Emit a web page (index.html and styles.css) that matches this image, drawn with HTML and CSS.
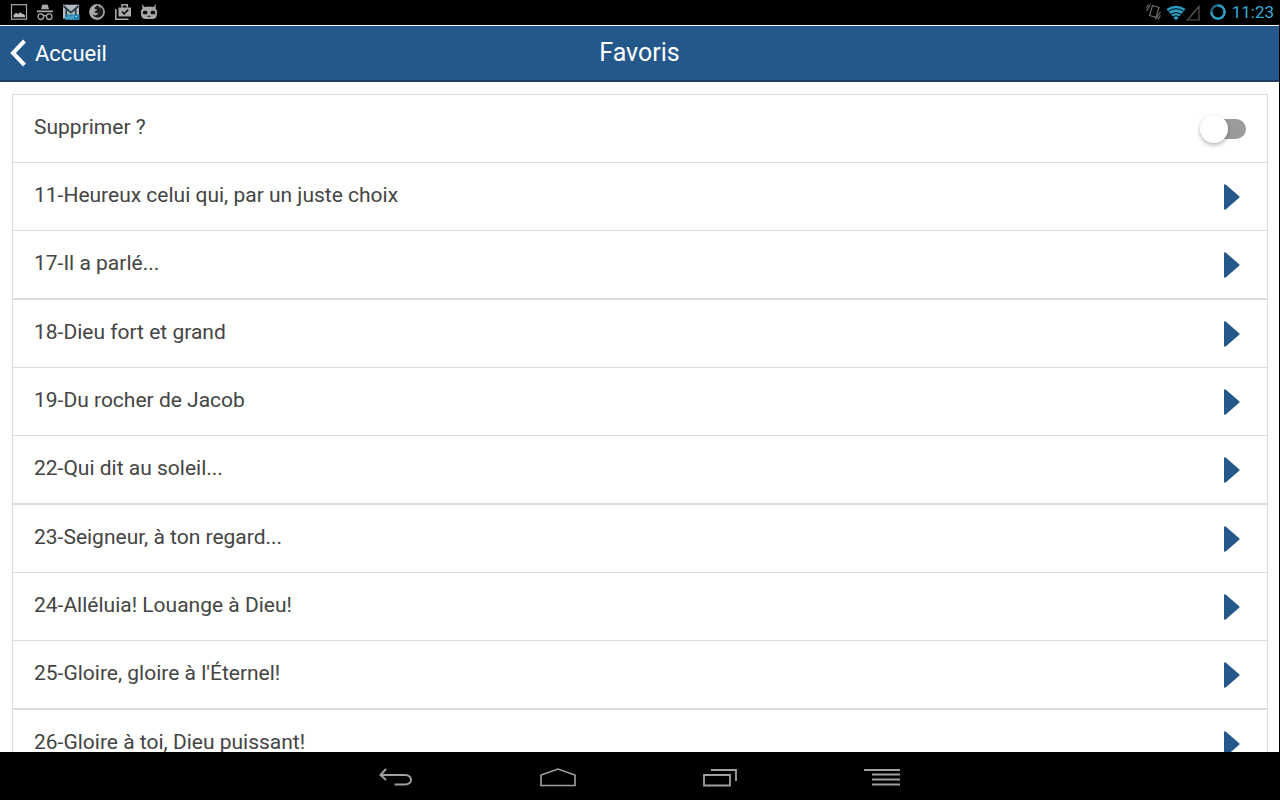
FILE: index.html
```html
<!DOCTYPE html>
<html lang="fr">
<head>
<meta charset="utf-8">
<meta name="viewport" content="width=device-width, initial-scale=1">
<title>Favoris</title>
<link rel="stylesheet" href="styles.css">
</head>
<body>
<svg class="defs" aria-hidden="true">
  <symbol id="arrow" viewBox="0 0 16 26"><path d="M1 1.2 14.500 13 1 24.8Z" fill="#24588b" stroke="#24588b" stroke-width="2" stroke-linejoin="round"/></symbol>
</svg>
<div class="status">
  <div class="status-icons">
    <svg width="18" height="18" viewBox="0 0 18 18"><rect x="1.500" y="1.700" width="15" height="14.500" fill="none" stroke="#a8a8a8" stroke-width="1.200"/><path d="M3.500 14.300v-2.300l2.500-2.200 2 1.200 2.300-1.800 2 1.800h1.200l1.500 1.500v1.800Z" fill="#b8b8b8"/></svg>
    <svg width="18" height="18" viewBox="0 0 18 18"><path d="M5 6.300 6.500 1.300q2.500 1.100 5 0l1.500 5ZM1 7.600h16v1.600H1Z" fill="#a8a8a8"/><g fill="none" stroke="#a8a8a8" stroke-width="1.300"><circle cx="4.800" cy="13.700" r="2.800"/><circle cx="13.200" cy="13.700" r="2.800"/><path d="M7.500 13q1.500-1 3 0"/></g></svg>
    <svg width="18" height="18" viewBox="0 0 18 18"><path d="M1 1.700h16v14H1Z" fill="#b4bcc0"/><path d="M1.500 3 9 9.700 16.500 3M4.300 14V6.500M13.700 14V6.500" fill="none" stroke="#263940" stroke-width="1.700"/><path d="M3 11.500h14.500V17H3Z" fill="#2384ad"/><path d="M4 14.500h2m1-2v3m2-2v3m2-4v3m2-2h2" stroke="#75c4df" fill="none"/></svg>
    <svg width="18" height="18" viewBox="0 0 18 18"><circle cx="9" cy="9" r="7.900" fill="#a8a8a8"/><path d="M9.500 2.200q2.200 1.200 2.800 3.500.5-1 .3-2.200 3.400 3 2.500 6.800-1.200 4.300-5.600 4.400-3.700-.2-4.800-3.400 1.700 1.700 3.800.8l2-1.500q-1-.9-2.400-.5l-1.500-.4q-.2-1.200 1.100-1.600l1.300-.8-.3-1-2-.1Q6.200 4.200 9.500 2.200Z" fill="#1c1c1c"/></svg>
    <svg width="18" height="18" viewBox="0 0 18 18"><path d="M4.500 4.500H17V13.500H4.500Z" fill="#a8a8a8"/><path d="M8 4.500V1.800h5.200v2.700M1.800 6v10.200h12.700" fill="none" stroke="#a8a8a8" stroke-width="1.600"/><path d="m8 8.700 2.200 2.200 4-4.200" fill="none" stroke="#151515" stroke-width="1.700"/></svg>
    <svg width="18" height="18" viewBox="0 0 18 18"><path d="M2 1 4.500 4q4.500-1.200 9 0L16 1l-.5 4.500Q17.500 7 17 10.500q0 5.500-5 5.500H6q-5 0-5-5.500Q.5 7 2.500 5.500Z" fill="#a8a8a8"/><rect x="2.800" y="7.800" width="4.600" height="3.400" rx="1.500" fill="#111"/><rect x="10.600" y="7.800" width="4.600" height="3.400" rx="1.500" fill="#111"/><path d="M7.500 13.300h3" stroke="#111"/></svg>
  </div>
  <div class="status-right">
    <svg width="64" height="20" viewBox="0 0 64 20"><g fill="none" stroke="#747474" stroke-width="1.100"><path d="M7.500 3.500 14 5.500 11 15.500 4.500 13.500Z M1.500 9 5.500 2.500M1.500 5.500 3.500 2.500M10.500 17.500 15.500 10M13 17.500l2.500-4"/></g><path d="M21.500 7q9.500-6.500 19 0L31 18.500Z" fill="#279ec4"/><path d="M23.500 9q7.500-4.500 15 0M26 12q5-3 10 0M28 14.700q3-2 6 0" fill="none" stroke="#000" stroke-width="1"/><path d="M42.500 18H54V4.500Z" fill="none" stroke="#555" stroke-width="1.200"/></svg>
    <svg width="18" height="18" viewBox="0 0 18 18"><circle cx="9" cy="9" r="6.600" fill="none" stroke="#176f8c" stroke-width="2.200"/><path d="M9 2.400A6.600 6.600 0 1 1 2.400 9" fill="none" stroke="#2aa4c8" stroke-width="2.200"/></svg>
    <time class="clock">11:23</time>
  </div>
</div>
<header class="header">
  <a class="back" href="#accueil"><svg width="17" height="28" viewBox="0 0 17 28"><path d="M14.500 2 3 14l11.500 12" fill="none" stroke="#fff" stroke-width="4"/></svg>Accueil</a>
  <h1 class="title">Favoris</h1>
</header>
<main class="content">
  <ul class="list">
    <li><label class="row" for="delete">Supprimer ?<input class="toggle" id="delete" type="checkbox" role="switch"></label></li>
    <li><a class="row" href="#11">11-Heureux celui qui, par un juste choix<svg class="arrow"><use href="#arrow"/></svg></a></li>
    <li><a class="row" href="#17">17-Il a parlé...<svg class="arrow"><use href="#arrow"/></svg></a></li>
    <li><a class="row" href="#18">18-Dieu fort et grand<svg class="arrow"><use href="#arrow"/></svg></a></li>
    <li><a class="row" href="#19">19-Du rocher de Jacob<svg class="arrow"><use href="#arrow"/></svg></a></li>
    <li><a class="row" href="#22">22-Qui dit au soleil...<svg class="arrow"><use href="#arrow"/></svg></a></li>
    <li><a class="row" href="#23">23-Seigneur, à ton regard...<svg class="arrow"><use href="#arrow"/></svg></a></li>
    <li><a class="row" href="#24">24-Alléluia! Louange à Dieu!<svg class="arrow"><use href="#arrow"/></svg></a></li>
    <li><a class="row" href="#25">25-Gloire, gloire à l'Éternel!<svg class="arrow"><use href="#arrow"/></svg></a></li>
    <li><a class="row" href="#26">26-Gloire à toi, Dieu puissant!<svg class="arrow"><use href="#arrow"/></svg></a></li>
  </ul>
</main>
<nav class="navbar">
  <button class="nav-button" aria-label="Retour"><svg width="36" height="20" viewBox="0 0 36 20"><path d="M8 1 2.500 7 8 12M2.500 7H27c8 0 8 9.500 0 9.500H16.500" fill="none" stroke="#a0a0a0" stroke-width="2"/></svg></button>
  <button class="nav-button" aria-label="Écran d'accueil"><svg width="36" height="20" viewBox="0 0 36 20"><path d="M1 17.500V7L18 1l17 6v10.500Z" fill="none" stroke="#a0a0a0" stroke-width="1.600"/></svg></button>
  <button class="nav-button" aria-label="Applications récentes"><svg width="36" height="20" viewBox="0 0 36 20"><path d="M2 7h26v10.500H2ZM9 2h25v11" fill="none" stroke="#a0a0a0" stroke-width="1.800"/></svg></button>
  <button class="nav-button" aria-label="Menu"><svg width="36" height="20" viewBox="0 0 36 20"><path d="M0 2h36M8 6.500h28M8 11.500h28M8 16.500h28" stroke="#a0a0a0" stroke-width="1.800"/></svg></button>
</nav>
</body>
</html>
```

FILE: styles.css
```css
* { box-sizing: border-box; }

body {
  margin: 0;
  height: 100vh;
  display: flex;
  flex-direction: column;
  overflow: hidden;
  background: #000;
  font-family: Roboto, sans-serif;
}

svg { display: block; flex: none; }
.defs { position: absolute; width: 0; height: 0; }

.status {
  flex: none;
  height: 25px;
  padding: 0 6px 1px 10px;
  display: flex;
  align-items: center;
  justify-content: space-between;
}
.status-icons { display: flex; gap: 8px; }
.status-right { display: flex; align-items: center; }
.clock { margin-left: 5px; color: #36aad5; font-size: 17px; line-height: 24px; }

.header {
  flex: none;
  height: 57px;
  margin-right: 1px;
  padding: 0 10px;
  display: grid;
  grid-template-columns: 1fr auto 1fr;
  align-items: center;
  background: #24588b;
  border-top: 1px solid #fff;
  border-bottom: 2px solid #1c3d61;
  color: #fff;
}
.back {
  display: flex;
  align-items: center;
  justify-self: start;
  gap: 8px;
  color: #fff;
  font-size: 22px;
  text-decoration: none;
}
.title { margin: 0; font-size: 25px; font-weight: 400; line-height: 32px; }

.content {
  flex: 1;
  min-height: 0;
  margin-right: 1px;
  padding: 12px 11px 0 12px;
  overflow: hidden;
  background: #fff;
}
.list {
  margin: 0;
  padding: 0;
  list-style: none;
  border: 1px solid #dcdcdc;
}
.list li { border-bottom: 1px solid #dcdcdc; }
.list li:nth-child(3n) { border-bottom-width: 2px; }
.row {
  min-height: 67px;
  padding: 0 21px 3px;
  display: flex;
  align-items: center;
  justify-content: space-between;
  color: #444;
  font-size: 21px;
  line-height: 24px;
  text-decoration: none;
}
.arrow { width: 16px; height: 26px; margin: 3px 6px 0 0; }

.toggle {
  appearance: none;
  position: relative;
  width: 42px;
  height: 20px;
  margin: 3px 0 0;
  border-radius: 10px;
  background: #9b9b9b;
}
.toggle::before {
  content: "";
  position: absolute;
  top: -4px;
  left: -4px;
  width: 28px;
  height: 28px;
  border-radius: 50%;
  background: #fff;
  box-shadow: 0 2px 4px rgba(0, 0, 0, 0.3);
}
.toggle:checked { background: #7c9cba; }
.toggle:checked::before { left: 18px; background: #24588b; }

.navbar {
  flex: none;
  height: 48px;
  padding-right: 2px;
  display: flex;
  justify-content: center;
  align-items: center;
  background: #000;
}
.nav-button {
  width: 162px;
  height: 48px;
  padding: 4px 0 0;
  border: 0;
  background: none;
  display: flex;
  align-items: center;
  justify-content: center;
}
```
